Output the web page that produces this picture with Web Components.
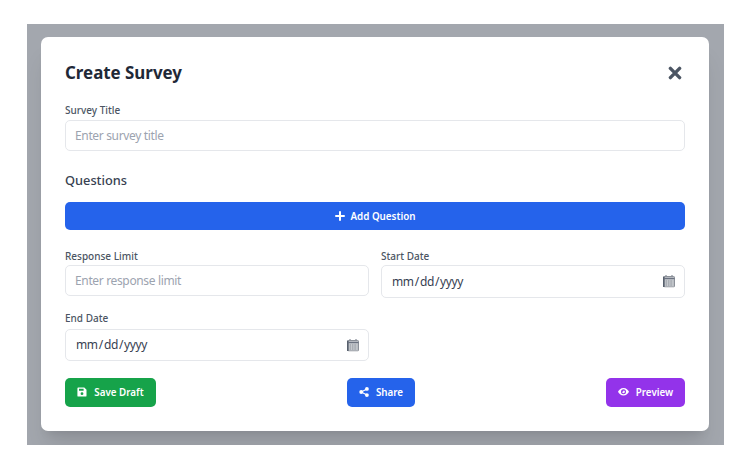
<!DOCTYPE html>
<html lang="en">
<head>
<meta charset="utf-8">
<title>Create Survey</title>
<style>
html,body{margin:0;background:#fff;font-family:"Noto Sans","Open Sans",sans-serif}
body{width:750px;height:469px;overflow:hidden}
</style>
</head>
<body>
<survey-overlay>
  <survey-modal>
    <span slot="title">Create Survey</span>
    <form-field label="Survey Title" placeholder="Enter survey title" h="31"></form-field>
    <section-title>Questions</section-title>
    <action-button full color="#2563eb" icon="plus">Add Question</action-button>
    <form-grid>
      <form-field label="Response Limit" placeholder="Enter response limit" h="31" gap="2"></form-field>
      <form-field label="Start Date" type="date" h="33" gap="2"></form-field>
      <form-field label="End Date" type="date" h="32" gap="4"></form-field>
    </form-grid>
    <action-row>
      <action-button color="#16a34a" icon="save" w="91">Save Draft</action-button>
      <action-button color="#2563eb" icon="share" w="68">Share</action-button>
      <action-button color="#9333ea" icon="eye" w="79">Preview</action-button>
    </action-row>
  </survey-modal>
</survey-overlay>
<script>
const def=(name,html)=>{
  customElements.define(name,class extends HTMLElement{
    constructor(){super();this.attachShadow({mode:'open'}).innerHTML=typeof html==='function'?html(this):html}
  });
};
def('survey-overlay',`<style>
:host{display:block;box-sizing:border-box;width:697px;height:421px;margin:24px 0 0 26.5px;background:#a3a7ae;padding:12.5px 14.5px 0;overflow:hidden}
</style><slot></slot>`);
def('survey-modal',`<style>
:host{display:block;box-sizing:border-box;width:668px;height:394px;background:#fff;border-radius:7px;padding:24px;box-shadow:0 20px 25px -5px rgba(0,0,0,.1),0 8px 10px -6px rgba(0,0,0,.1)}
header{display:flex;justify-content:space-between;align-items:center;height:24px;margin-bottom:18px}
h2{margin:0;font-size:16.9px;font-weight:700;color:#1f2937;line-height:24px}
svg{display:block;width:14px;height:14px;margin-right:3px}
</style>
<header><h2><slot name="title"></slot></h2>
<svg viewBox="0 0 14 14" aria-hidden="true"><path d="M2.4 2.4 11.6 11.6M11.6 2.4 2.4 11.6" stroke="#4b5563" stroke-width="3.4" stroke-linecap="round"/></svg></header>
<slot></slot>`);
def('form-field',h=>{
  const type=h.getAttribute('type')||'text',ph=h.getAttribute('placeholder');
  const tall=h.getAttribute('h')!=='32';
  const cal=type==='date'?`<svg class="cal" viewBox="0 0 12 13" aria-hidden="true"><path d="M3 .5v2M9 .5v2" stroke="#6b7280" stroke-width="1"/><rect x="1" y="2" width="10.5" height="10.5" rx=".8" fill="#cdd0d4" stroke="#8b9098"/><path d="M.8 2v10.5" stroke="#4b5563" stroke-width="1.4"/><path d="M1 4h10.5" stroke="#6b7280" stroke-width="1.4"/><path d="M2.5 6.5h8M2.5 8.5h8M2.5 10.5h8" stroke="#868c95" stroke-dasharray="1.6 .8"/></svg>`:'';
  return `<style>
:host{display:block}
label{display:block;font-size:10px;font-weight:500;color:#4b5563;line-height:14px;margin-bottom:${h.getAttribute('gap')||3}px}
.w{position:relative}
input{display:block;box-sizing:border-box;width:100%;height:${h.getAttribute('h')}px;border:1px solid #e5e7eb;border-radius:5px;padding:${tall?1:0}px 9px 0;font:12px "Noto Sans","Open Sans",sans-serif;letter-spacing:-.35px;color:#374151;background:#fff;outline:0;margin:0}
input::placeholder{color:#9ca3af;opacity:1}
input::-webkit-calendar-picker-indicator{opacity:0}
.cal{position:absolute;right:10px;top:50%;width:12px;height:13px;transform:translateY(-50%)}
</style><label for="i">${h.getAttribute('label')}</label><div class="w"><input id="i" type="${type}"${ph?` placeholder="${ph}"`:''}>${cal}</div>`;
});
def('section-title',`<style>
:host{display:block;font-size:12.8px;font-weight:500;color:#374151;line-height:18px;margin:20px 0 13px}
</style><slot></slot>`);
def('form-grid',`<style>
:host{display:grid;grid-template-columns:1fr 1fr;column-gap:12px;row-gap:13px;margin-top:19px;align-items:start}
</style><slot></slot>`);
def('action-row',`<style>
:host{display:flex;justify-content:space-between;margin-top:17px}
</style><slot></slot>`);
const icons={
 plus:'<path d="M5 1v8M1 5h8" stroke="currentColor" stroke-width="2" stroke-linecap="round" fill="none"/>',
 save:'<path fill-rule="evenodd" d="M1.3.5h6L9.5 2.7v6a.9.9 0 0 1-.9.9H1.3a.9.9 0 0 1-.9-.9V1.4A.9.9 0 0 1 1.3.5ZM2 1.8v2h4.6v-2ZM5 5.3a1.4 1.4 0 1 0 0 2.8 1.4 1.4 0 0 0 0-2.8Z" fill="currentColor"/>',
 share:'<g fill="currentColor"><circle cx="2.2" cy="5" r="1.9"/><circle cx="7.9" cy="1.9" r="1.9"/><circle cx="7.9" cy="8.1" r="1.9"/></g><path d="M7.9 1.9 2.2 5l5.7 3.1" stroke="currentColor" stroke-width="1.1" fill="none"/>',
 eye:'<path fill-rule="evenodd" d="M5.5 1C8.2 1 10.2 3 11 4.8 10.2 6.6 8.2 8.6 5.5 8.6S.8 6.6 0 4.8C.8 3 2.8 1 5.5 1Zm0 1.3a2.5 2.5 0 1 0 0 5 2.5 2.5 0 0 0 0-5Zm0 1.1a1.4 1.4 0 1 1-1.4 1.4c.5.2 1.3-.4 1.4-1.4Z" fill="currentColor"/>'
};
def('action-button',h=>{
  const ic=h.getAttribute('icon'),full=h.hasAttribute('full'),vb=ic==='eye'?'0 0 11 10':'0 0 10 10';
  return `<style>
:host{display:${full?'block':'inline-block'}}
button{display:flex;align-items:center;justify-content:center;gap:${full?6:7}px;box-sizing:border-box;width:${full?'100%':h.getAttribute('w')+'px'};height:${full?28:29}px;border:0;border-radius:5px;background:${h.getAttribute('color')};color:#fff;font:600 9.8px "Noto Sans","Open Sans",sans-serif;padding:1px 0 0;margin:0}
svg{width:${ic==='eye'?11:10}px;height:10px;display:block;margin-top:-1px}
</style><button type="button"><svg viewBox="${vb}" aria-hidden="true">${icons[ic]}</svg><slot></slot></button>`;
});
</script>
</body>
</html>
